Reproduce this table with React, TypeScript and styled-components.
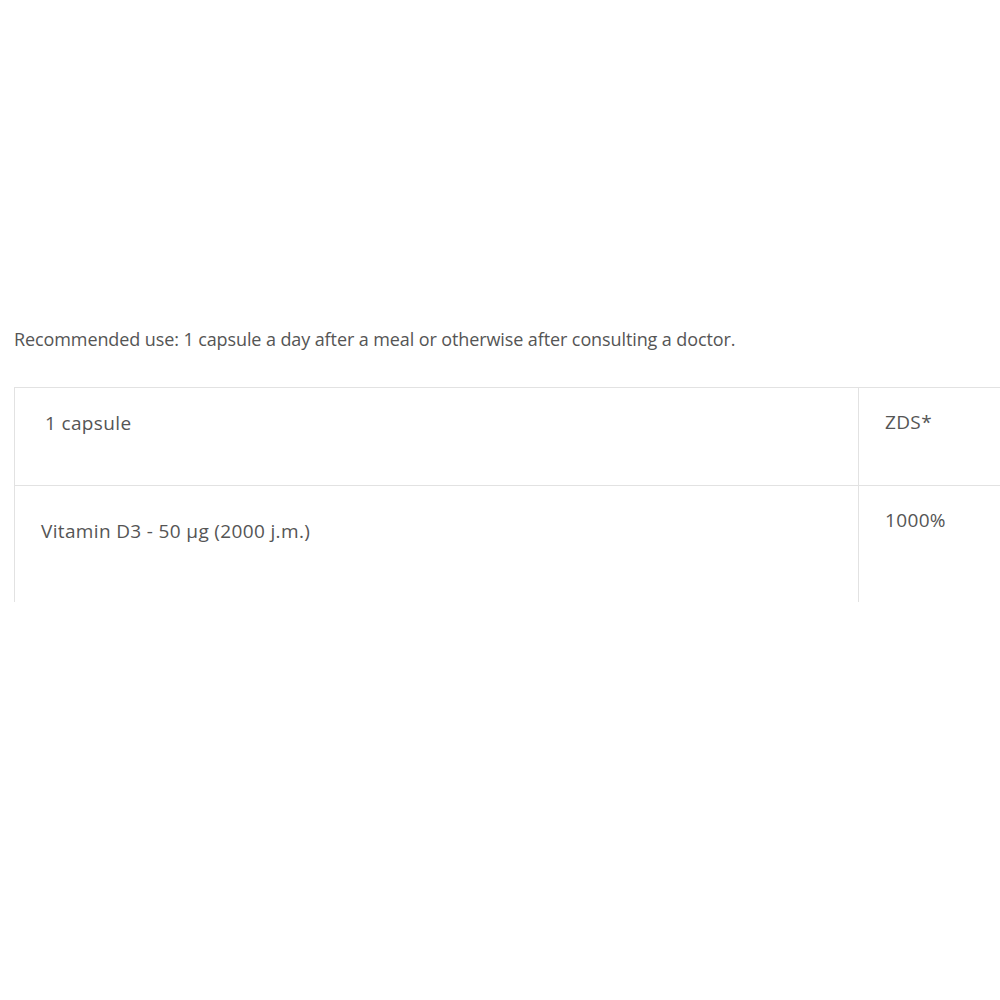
import React from "react";
import styled, { createGlobalStyle } from "styled-components";

const Global = createGlobalStyle`
  html, body { margin: 0; padding: 0; background: #fff; overflow: hidden; }
  body { font-family: "Open Sans", "Liberation Sans", sans-serif; color: #555; }
`;

const Page = styled.div`
  width: 1000px;
  height: 1000px;
  overflow: hidden;
  padding: 325px 0 0 14px;
  box-sizing: border-box;
`;

const Usage = styled.p`
  margin: 0;
  font-size: 18px;
  line-height: 28px;
  letter-spacing: -0.1px;
  color: #555;
  white-space: nowrap;
`;

const TableFrame = styled.div`
  margin-top: 34px;
  height: 215px;
  width: 1200px;
  overflow: hidden;
`;

const Grid = styled.div`
  display: grid;
  grid-template-columns: 844px 1fr;
  border-top: 1px solid #e2e2e2;
  border-left: 1px solid #e2e2e2;
`;

const Cell = styled.div<{ $h: number; $pl: number; $pt: number }>`
  height: ${(p) => p.$h}px;
  box-sizing: border-box;
  padding: ${(p) => p.$pt}px 0 0 ${(p) => p.$pl}px;
  border-right: 1px solid #e2e2e2;
  border-bottom: 1px solid #e2e2e2;
  font-size: 19px;
  line-height: 26px;
  letter-spacing: 0.35px;
  color: #555;
  white-space: nowrap;
`;

export default function App() {
  return (
    <>
      <Global />
      <Page>
        <Usage>
          Recommended use: 1 capsule a day after a meal or otherwise after consulting a doctor.
        </Usage>
        <TableFrame>
          <Grid>
            <Cell $h={98} $pl={30} $pt={22}>1 capsule</Cell>
            <Cell $h={98} $pl={26} $pt={21}>ZDS*</Cell>
            <Cell $h={140} $pl={26} $pt={32}>Vitamin D3 - 50 µg (2000 j.m.)</Cell>
            <Cell $h={140} $pl={26} $pt={21}>1000%</Cell>
          </Grid>
        </TableFrame>
      </Page>
    </>
  );
}
